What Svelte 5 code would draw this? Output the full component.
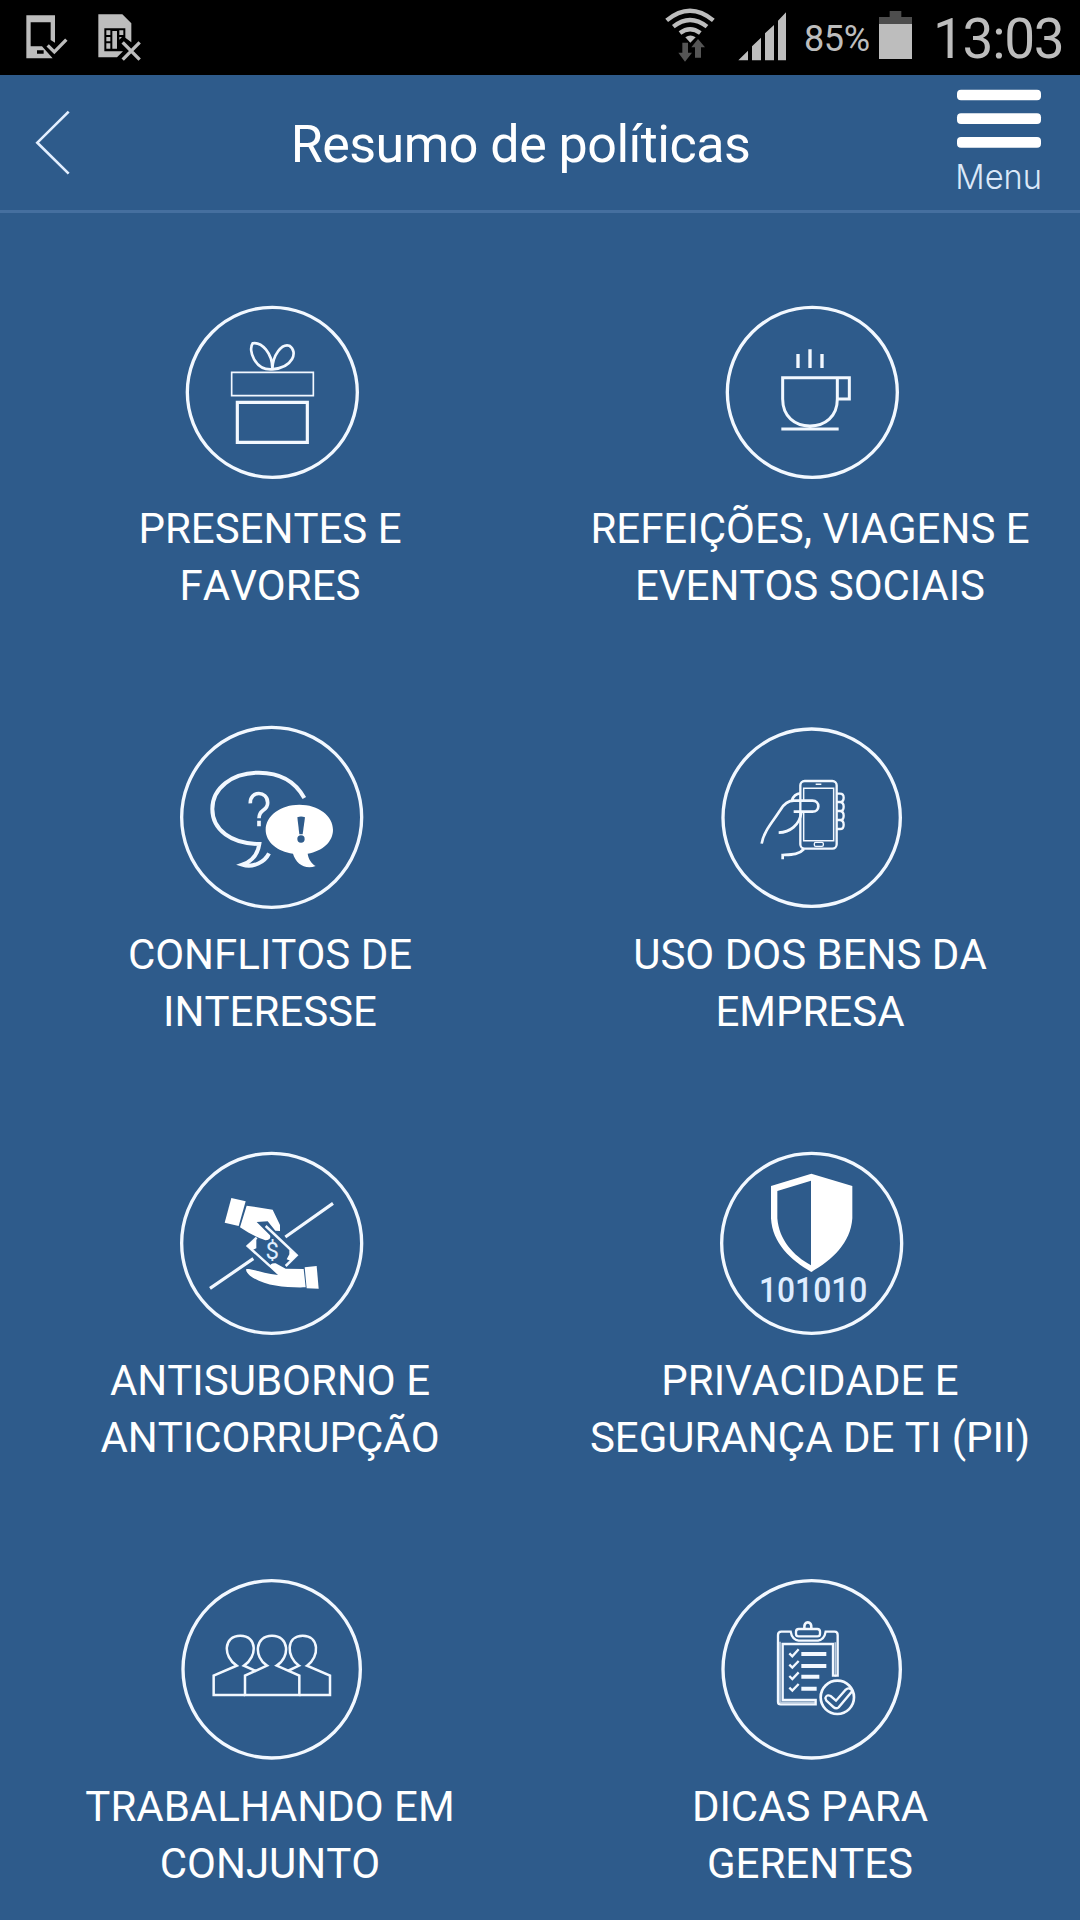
<script>
  const policies = [
    { icon: 'gift', top: 0, r: 255, cx: 307, cy: 307, lines: ['PRESENTES E', 'FAVORES'] },
    { icon: 'cup', top: 0, r: 255, cx: 307, cy: 307, lines: ['REFEIÇÕES, VIAGENS E', 'EVENTOS SOCIAIS'] },
    { icon: 'talk', top: 3, r: 270, cx: 305, cy: 307, lines: ['CONFLITOS DE', 'INTERESSE'] },
    { icon: 'phone', top: 3, r: 266, cx: 305, cy: 308, lines: ['USO DOS BENS DA', 'EMPRESA'] },
    { icon: 'bribe', top: 6, r: 270, cx: 305, cy: 310, lines: ['ANTISUBORNO E', 'ANTICORRUPÇÃO'] },
    { icon: 'shield', top: 6, r: 270, cx: 305, cy: 310, lines: ['PRIVACIDADE E', 'SEGURANÇA DE TI (PII)'] },
    { icon: 'team', top: 9, r: 266, cx: 305, cy: 313, lines: ['TRABALHANDO EM', 'CONJUNTO'] },
    { icon: 'list', top: 9, r: 266, cx: 305, cy: 313, lines: ['DICAS PARA', 'GERENTES'] }
  ];
</script>

<div class="screen">
  <div class="status">
    <svg class="s-phone" width="42" height="44" viewBox="78 44 126 132">
      <path fill="#bdbdbd" fill-rule="evenodd" d="M79 45H165V127L152 119V66H92V138H126L158 174H79ZM111 150V160H131V150Z" />
      <path fill="none" stroke="#bdbdbd" stroke-width="10" d="M143 135L163 155L199 118" />
    </svg>
    <svg class="s-sim" width="43" height="47" viewBox="293 41 129 141">
      <path fill="#bdbdbd" d="M294 42H366L393 69V126L375 112V84H312V153H368L350 171H294Z" />
      <path fill="#bdbdbd" d="M318 90h12v14h-12zM318 110h12v13h-12zM318 129h12v16h-12zM336 92h14v53h-14zM357 90h12v14h-12zM357 110h8l-8 8z" />
      <path fill="none" stroke="#bdbdbd" stroke-width="10" d="M367 126L418 178M418 126L367 178" />
    </svg>
    <svg class="s-wifi" width="50" height="54" viewBox="75 25 150 162">
      <g fill="none" stroke="#bdbdbd" stroke-width="13">
        <path d="M80 62Q150 4 220 62" />
        <path d="M100 81Q150 41 201 81" />
        <path d="M120 100Q150 77 181 100" />
      </g>
      <path fill="#bdbdbd" d="M136 113Q151 102 167 113L151 129Z" />
      <path fill="#555" d="M127 129h17v30h12l-21 27l-20-27h12zM165 174h18v-31h12l-21-25l-20 25h11z" />
    </svg>
    <svg class="s-signal" width="49" height="49" viewBox="294 35 147 147">
      <path fill="#bdbdbd" d="M295 180L324 151V180ZM336 180V138L363 112V180ZM375 180V99L402 74V180ZM414 180V61L438 36V180Z" />
    </svg>
    <span class="percent">85%</span>
    <svg class="s-battery" width="33" height="48" viewBox="717 33 99 144">
      <path fill="#4d4d4d" d="M749 33h35v18h32v22h-99v-22h32z" />
      <path fill="#bdbdbd" d="M717 72h99v105h-99z" />
    </svg>
    <span class="clock">13:03</span>
  </div>

  <header>
    <svg class="back" width="36" height="66" viewBox="105 330 108 198">
      <path fill="none" stroke="#e3efff" stroke-width="8" d="M206 335L112 428L206 521" />
    </svg>
    <h1>Resumo de políticas</h1>
    <svg class="menu" width="90" height="118" viewBox="945 264 270 354">
      <g fill="#fff">
        <rect x="951" y="269" width="252" height="32" rx="12" />
        <rect x="951" y="340" width="252" height="32" rx="12" />
        <rect x="951" y="411" width="252" height="32" rx="12" />
      </g>
      <text x="946" y="566" textLength="260" lengthAdjust="spacingAndGlyphs" class="menu-label">Menu</text>
    </svg>
  </header>

  <main>
    {#each policies as p}
      <section>
        <svg width="210" height="210" viewBox="-15 {p.top} 630 630">
          <g class="art">
            <circle cx={p.cx} cy={p.cy} r={p.r} stroke-width="10" />
            {#if p.icon === 'gift'}
              <path stroke-width="5" d="M185 247H430V317H185Z" />
              <path stroke-width="9.5" d="M202 337H412V457H202Z" />
              <path stroke-width="8" d="M307 238C255 242 233 180 248 160C275 155 308 190 307 238C308 195 335 160 358 167C385 185 370 232 307 238" />
            {:else if p.icon === 'cup'}
              <path stroke-width="9" d="M218 263H418V327H382M382 263V327C382 380 345 408 300 408S218 380 218 327V259M214 417H386" />
              <path stroke-width="10" d="M264 192V234M300 178V234M336 192V234" />
            {:else if p.icon === 'talk'}
              <path stroke-width="12" d="M403 249C375 198 330 173 267 173C185 173 127 220 127 282C127 345 185 387 268 387C263 420 243 440 217 449C250 460 285 440 297 415" />
              <path class="solid" d="M388 269C445 269 489 302 489 344C489 380 458 408 413 416C416 434 425 446 437 453C405 465 377 445 369 416C322 409 287 381 287 344C287 302 332 269 388 269Z" />
              <path stroke-width="11" d="M241 265C239 226 293 226 293 263C293 290 267 280 267 310M267 317V334" />
              <path class="hole" d="M382 307Q393 302 405 307L398 358H388Z" />
              <circle class="hole" cx="393" cy="372" r="11" />
            {:else if p.icon === 'phone'}
              <rect x="271" y="198" width="109" height="203" rx="13" stroke-width="7" />
              <path stroke-width="4.5" d="M281 256V220H371V377H281V292M317 208H334" />
              <rect x="313" y="382" width="27" height="12" rx="4" stroke-width="4" />
              <path stroke-width="8" d="M155 386C160 350 190 318 211 285C222 266 235 257 252 257H307C331 257 331 290 307 290H251M245 257C250 243 258 236 271 235M274 292C269 330 240 352 206 353M282 402C266 420 244 419 218 420V433" />
              <path stroke-width="7" d="M380 236H390Q401 236 401 248T390 261H380M390 261Q401 262 401 275T390 288H380M390 288Q401 289 401 302T390 315H380M390 315Q401 316 401 329T390 342H380" />
            {:else if p.icon === 'bribe'}
              <path stroke-width="9.5" d="M120 445L250 356M346 291L489 190" />
              <path class="solid" d="M184 174L227 184L206 258L164 248Z" />
              <path class="solid" d="M230 197L308 209L330 255V273L316 272L293 244L260 246L300 286Q305 300 286 301C255 290 238 280 210 262Z" />
              <path stroke-width="7.5" d="M287 258L380 346L347 378M260 293L233 318L301 379" />
              <path class="solid" d="M232 316L259 295V325L245 331ZM381 346L358 330V343L350 358L363 363Z" />
              <text x="307" y="357" class="dollar">$</text>
              <path class="solid" d="M229 387C250 386 280 401 324 405L299 382Q300 368 317 370L347 386L401 387L407 442C345 443 282 439 240 407Q226 395 229 387Z" />
              <path class="solid" d="M404 382L440 378L446 446L410 445Z" />
            {:else if p.icon === 'shield'}
              <path class="solid" fill-rule="evenodd" d="M304 101L427 138V235C422 310 366 360 304 396C242 360 187 310 183 235V138ZM303 122L202 153V235C207 300 250 347 303 376Z" />
              <text x="147" y="486" textLength="325" lengthAdjust="spacingAndGlyphs" class="digits">101010</text>
            {:else if p.icon === 'team'}
              <g stroke-width="7.5">
                <path d="M291 302C250 275 255 212 306 212S362 275 320 302L388 332V390H225V332Z" />
                <path d="M225 390H131V332L200 302C158 275 160 212 211 212S263 275 222 302L258 318" />
                <path d="M388 390H480V332L411 302C450 275 448 212 398 212S348 275 387 302L353 318" />
              </g>
            {:else}
              <path stroke-width="7" d="M317 418H212Q204 418 204 410V210Q204 200 214 200H242Q246 224 266 227H324Q343 224 347 200H374Q383 200 383 210V332H369V237H218V405H317Z" />
              <path stroke-width="5" d="M210 230V412H317M376 335V232" opacity=".7" />
              <rect x="258" y="192" width="72" height="22" rx="8" stroke-width="7" />
              <path stroke-width="8" d="M283 190C280 166 307 166 304 190" />
              <path stroke-width="12" d="M274 267H349M274 303H349M274 335H328M274 371H320" />
              <path stroke-width="7" d="M238 265L247 274L266 253M238 299L247 308L266 288M238 333L247 342L266 322M238 368L247 377L266 357" />
              <circle cx="382" cy="397" r="50" stroke-width="8" />
              <path stroke-width="7" d="M346 399Q350 387 362 393L378 407L407 374Q420 365 427 378L386 427Q378 433 370 426L349 407Z" />
            {/if}
          </g>
        </svg>
        <h2>{p.lines[0]}<br />{p.lines[1]}</h2>
      </section>
    {/each}
  </main>
</div>

<style>
  :global(body) {
    margin: 0;
    background: #2e5b8b;
  }
  .screen {
    width: 1080px;
    height: 1920px;
    overflow: hidden;
    background: #2e5b8b;
    color: #fff;
    font-family: Roboto, sans-serif;
  }
  svg {
    display: block;
    flex: none;
  }
  .status {
    display: flex;
    align-items: flex-start;
    box-sizing: border-box;
    height: 75px;
    background: #000;
    color: #bdbdbd;
    padding-left: 26px;
  }
  .s-phone {
    margin-top: 15px;
  }
  .s-sim {
    margin: 14px 0 0 30px;
  }
  .s-wifi {
    margin: 8px 0 0 524px;
  }
  .s-signal {
    margin: 12px 0 0 23px;
  }
  .percent {
    width: 75px;
    margin-left: 17px;
    font-size: 36px;
    line-height: 42px;
    padding-top: 18px;
    letter-spacing: -0.4px;
  }
  .s-battery {
    margin-top: 11px;
  }
  .clock {
    margin-left: 21px;
    font-size: 55px;
    line-height: 64px;
    padding-top: 7px;
    letter-spacing: -1.3px;
  }
  header {
    display: flex;
    align-items: flex-start;
    justify-content: space-between;
    box-sizing: border-box;
    height: 138px;
    border-bottom: 3px solid #456f9f;
    padding: 0 35px;
  }
  .back {
    margin-top: 35px;
  }
  h1 {
    margin: 38px 0 0 15px;
    font-size: 52px;
    line-height: 64px;
    font-weight: 400;
    letter-spacing: -0.52px;
  }
  .menu {
    margin-top: 13px;
    overflow: visible;
  }
  .menu-label {
    font-family: Inter, sans-serif;
    font-size: 103px;
    font-weight: 300;
    fill: #dbe8f8;
  }
  main {
    display: grid;
    grid-template-columns: 540px 540px;
    grid-auto-rows: 426px;
    padding-top: 77px;
  }
  section {
    display: flex;
    flex-direction: column;
    align-items: center;
  }
  h2 {
    margin: 0;
    font-size: 42px;
    line-height: 57px;
    font-weight: 400;
    font-kerning: none;
    text-align: center;
    white-space: nowrap;
  }
  .art {
    fill: none;
    stroke: #f2f8ff;
  }
  .art .solid {
    fill: #fff;
    stroke: none;
  }
  .art .hole {
    fill: #2e5b8b;
    stroke: none;
  }
  .art text {
    fill: #dfedff;
    stroke: none;
  }
  .dollar {
    font-size: 72px;
    text-anchor: middle;
  }
  .digits {
    font-size: 103px;
    font-weight: 500;
  }
</style>
